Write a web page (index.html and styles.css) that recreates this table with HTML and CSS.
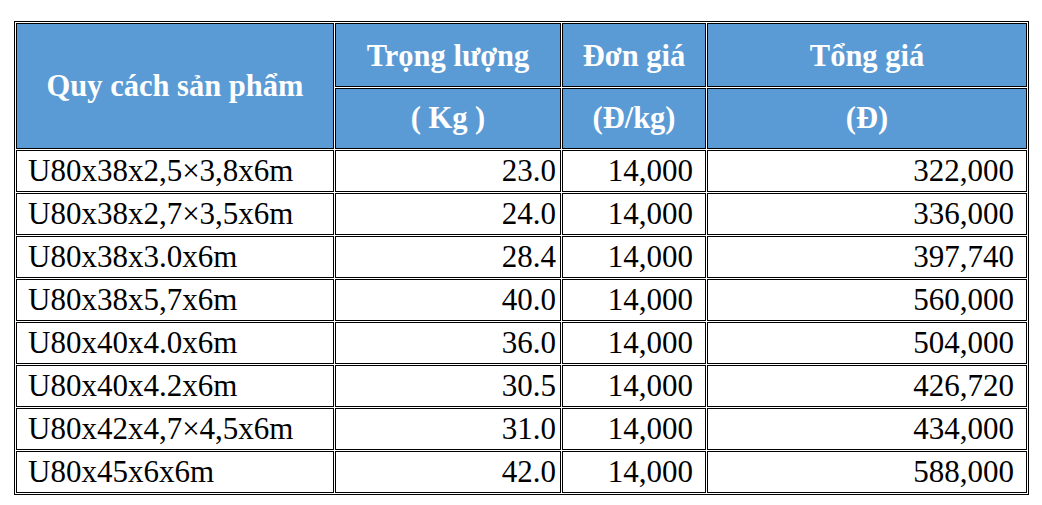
FILE: index.html
```html
<!DOCTYPE html>
<html lang="vi">
<head>
<meta charset="utf-8">
<title>Bảng giá thép U80</title>
<link rel="stylesheet" href="styles.css">
</head>
<body>
<div class="page">
  <table class="price">
    <colgroup>
      <col class="c1">
      <col class="c2">
      <col class="c3">
      <col class="c4">
    </colgroup>
    <thead>
      <tr class="h1">
        <th rowspan="2" class="spec-h">Quy cách sản phẩm</th>
        <th>Trọng lượng</th>
        <th>Đơn giá</th>
        <th>Tổng giá</th>
      </tr>
      <tr class="h2">
        <th>( Kg )</th>
        <th>(Đ/kg)</th>
        <th>(Đ)</th>
      </tr>
    </thead>
    <tbody>
      <tr><td class="spec">U80x38x2,5×3,8x6m</td><td class="kg">23.0</td><td class="num">14,000</td><td class="num">322,000</td></tr>
      <tr><td class="spec">U80x38x2,7×3,5x6m</td><td class="kg">24.0</td><td class="num">14,000</td><td class="num">336,000</td></tr>
      <tr><td class="spec">U80x38x3.0x6m</td><td class="kg">28.4</td><td class="num">14,000</td><td class="num">397,740</td></tr>
      <tr><td class="spec">U80x38x5,7x6m</td><td class="kg">40.0</td><td class="num">14,000</td><td class="num">560,000</td></tr>
      <tr><td class="spec">U80x40x4.0x6m</td><td class="kg">36.0</td><td class="num">14,000</td><td class="num">504,000</td></tr>
      <tr><td class="spec">U80x40x4.2x6m</td><td class="kg">30.5</td><td class="num">14,000</td><td class="num">426,720</td></tr>
      <tr><td class="spec">U80x42x4,7×4,5x6m</td><td class="kg">31.0</td><td class="num">14,000</td><td class="num">434,000</td></tr>
      <tr><td class="spec">U80x45x6x6m</td><td class="kg">42.0</td><td class="num">14,000</td><td class="num">588,000</td></tr>
    </tbody>
  </table>
</div>
</body>
</html>
```

FILE: styles.css
```css
html, body {
  margin: 0;
  padding: 0;
  background: #ffffff;
}

.page {
  padding: 21px 0 0 14px;
}

.price {
  table-layout: fixed;
  width: 1015px;
  border-collapse: separate;
  border-spacing: 1px;
  border: 1px solid #000000;
  font-family: "Liberation Serif", "Times New Roman", serif;
  color: #000000;
}

.c1 { width: 318px; }
.c2 { width: 226px; }
.c3 { width: 144px; }
.c4 { width: 320px; }

.price th,
.price td {
  box-sizing: border-box;
  border: 1px solid #000000;
  padding: 0;
  vertical-align: middle;
}

.price th {
  background: #5b9bd5;
  color: #ffffff;
  font-weight: bold;
  font-size: 30.5px;
  text-align: center;
}

.h1 th {
  height: 64px;
  padding-top: 2px;
}

.h2 th {
  height: 61px;
}

.price th.spec-h {
  height: auto;
  padding-top: 0;
}

.price td {
  height: 42px;
  font-size: 31px;
  line-height: 1.15;
}

.price td.spec {
  text-align: left;
  padding-left: 11px;
}

.price td.kg {
  text-align: right;
  padding-right: 4px;
}

.price td.num {
  text-align: right;
  padding-right: 12px;
}
```
